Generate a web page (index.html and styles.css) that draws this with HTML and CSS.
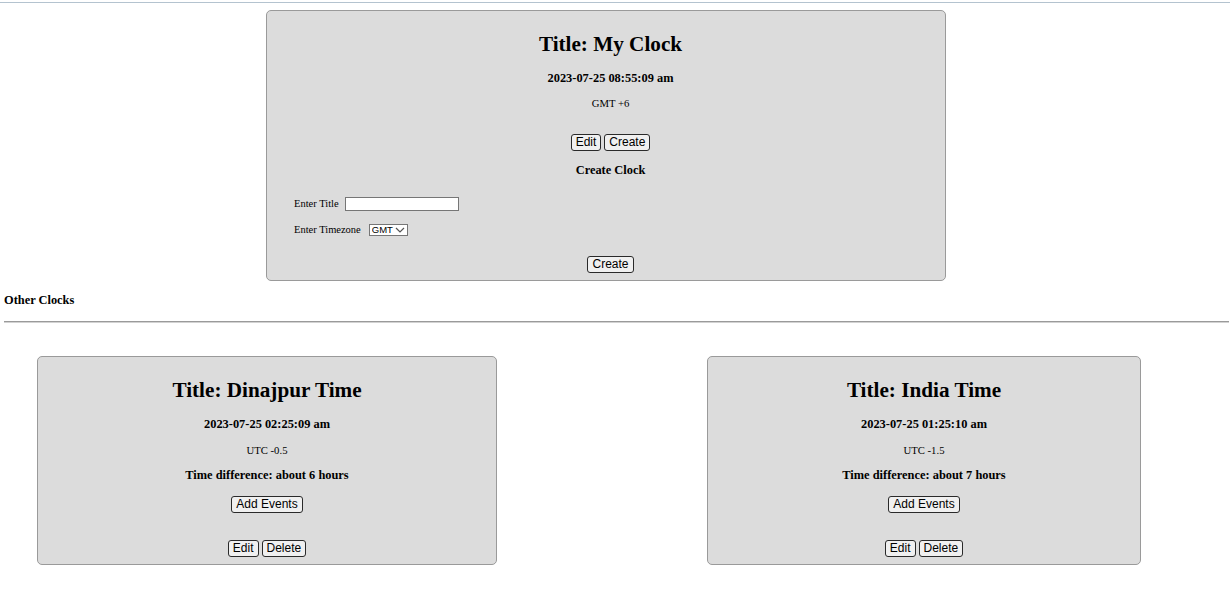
FILE: index.html
```html
<!DOCTYPE html>
<html>
<head>
<meta charset="utf-8">
<title>Clocks</title>
<link rel="stylesheet" href="styles.css">
</head>
<body>
<div class="topline"></div>
<div class="main-card">
  <h2 class="title">Title: My Clock</h2>
  <div class="date">2023-07-25 08:55:09 am</div>
  <div class="zone">GMT +6</div>
  <div class="btn-row gap-big">
    <button class="btn">Edit</button>
    <button class="btn">Create</button>
  </div>
  <div class="subhead">Create Clock</div>
  <form class="form">
    <label class="field field-title">Enter Title <input class="text-input" type="text"></label>
    <label class="field field-zone">Enter Timezone
      <select class="zone-select"><option>GMT</option></select>
    </label>
    <div class="btn-row form-submit">
      <button class="btn" type="button">Create</button>
    </div>
  </form>
</div>
<div class="section-title">Other Clocks</div>
<hr class="divider">
<div class="clock-list">
  <div class="clock-card card-a">
    <h2 class="title">Title: Dinajpur Time</h2>
    <div class="date">2023-07-25 02:25:09 am</div>
    <div class="zone zone-sm">UTC -0.5</div>
    <div class="diff">Time difference: about 6 hours</div>
    <div class="btn-row events"><button class="btn">Add Events</button></div>
    <div class="btn-row actions"><button class="btn">Edit</button><button class="btn">Delete</button></div>
  </div>
  <div class="clock-card card-b">
    <h2 class="title">Title: India Time</h2>
    <div class="date">2023-07-25 01:25:10 am</div>
    <div class="zone zone-sm">UTC -1.5</div>
    <div class="diff">Time difference: about 7 hours</div>
    <div class="btn-row events"><button class="btn">Add Events</button></div>
    <div class="btn-row actions"><button class="btn">Edit</button><button class="btn">Delete</button></div>
  </div>
</div>
</body>
</html>
```
FILE: styles.css
```css
* { box-sizing: border-box; }
html, body { margin: 0; padding: 0; background: #fff; }
body {
  font-family: "Liberation Serif", "Times New Roman", serif;
  color: #000;
  width: 1230px;
  height: 614px;
  overflow: hidden;
}
.topline {
  height: 1px;
  margin-top: 2px;
  background: #b4c3cf;
}
.main-card {
  width: 680px;
  margin: 7px 0 0 266px;
  background: #dcdcdc;
  border: 1px solid #9a9a9a;
  border-radius: 5px;
  padding: 0 0 7px 9px;
  display: flex;
  flex-direction: column;
  align-items: center;
}
.title {
  margin: 21px 0 0;
  font-size: 21.2px;
  line-height: 24px;
  font-weight: bold;
}
.date {
  margin-top: 14px;
  font-size: 12.4px;
  line-height: 16px;
  font-weight: bold;
}
.zone {
  margin-top: 10px;
  font-size: 10.7px;
  line-height: 14px;
}
.zone-sm { margin-top: 11px; }
.btn-row {
  display: flex;
  justify-content: center;
  gap: 3px;
}
.gap-big { margin-top: 24px; }
.btn {
  font-family: "Liberation Sans", Arial, sans-serif;
  font-size: 12px;
  line-height: 15px;
  height: 17px;
  padding: 0 4px;
  margin: 0;
  border: 1px solid #2a2a2a;
  border-radius: 3px;
  background: #f0f0f0;
  color: #000;
}
.subhead {
  margin-top: 11px;
  font-size: 12.4px;
  line-height: 16px;
  font-weight: bold;
}
.form {
  align-self: stretch;
  display: flex;
  flex-direction: column;
  margin: 0;
  padding-left: 18px;
}
.field {
  display: flex;
  align-items: center;
  gap: 6px;
  font-size: 10.5px;
  line-height: 14px;
}
.field-title { margin-top: 19px; height: 14px; }
.field-zone { margin-top: 13px; height: 12px; gap: 8px; }
.text-input {
  width: 114px;
  height: 14px;
  margin: 0;
  padding: 0;
  border: 1px solid #767676;
  background: #fff;
}
.zone-select {
  -webkit-appearance: none;
  appearance: none;
  width: 39px;
  height: 12px;
  margin: 0;
  padding: 0 0 0 2px;
  border: 1px solid #767676;
  border-radius: 0;
  font-family: "Liberation Sans", Arial, sans-serif;
  font-size: 9.5px;
  line-height: 10px;
  color: #000;
  background-color: #fff;
  background-image: url("data:image/svg+xml;utf8,<svg xmlns='http://www.w3.org/2000/svg' width='10' height='6' viewBox='0 0 10 6'><path d='M1 1 L5 5 L9 1' fill='none' stroke='%23555' stroke-width='1.2'/></svg>");
  background-repeat: no-repeat;
  background-position: right 2px center;
}
.form-submit { margin-top: 20px; padding-right: 18px; }
.section-title {
  margin: 11px 0 0 4px;
  font-size: 12.4px;
  line-height: 16px;
  font-weight: bold;
}
.divider {
  margin: 13px 1px 0 4px;
  height: 2px;
  border: 0;
  border-top: 1px solid #9a9a9a;
  border-bottom: 1px solid #d2d2d2;
}
.clock-list {
  display: flex;
  margin-top: 33px;
  padding-left: 37px;
  gap: 210px;
  align-items: flex-start;
}
.clock-card {
  background: #dcdcdc;
  border: 1px solid #9a9a9a;
  border-radius: 5px;
  padding: 0 0 7px;
  display: flex;
  flex-direction: column;
  align-items: center;
}
.card-a { width: 460px; }
.card-b { width: 434px; }
.diff {
  margin-top: 10px;
  font-size: 12.4px;
  line-height: 16px;
  font-weight: bold;
}
.events { margin-top: 13px; }
.actions { margin-top: 27px; }
```
